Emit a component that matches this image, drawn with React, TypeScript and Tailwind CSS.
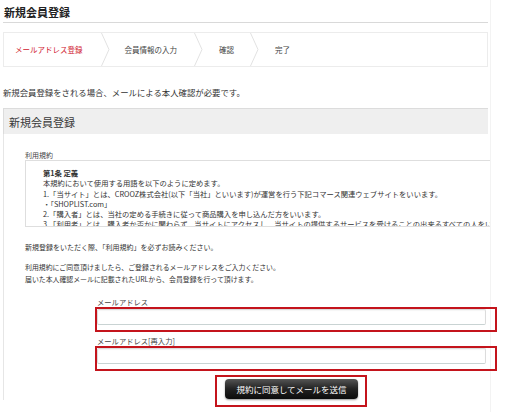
import React from "react";

const Chevron = () => (
  <svg width="9" height="33" viewBox="0 0 9 33" className="shrink-0">
    <polyline points="0.5,0 8,16.5 0.5,33" fill="none" stroke="#e2e2e2" strokeWidth="1" />
  </svg>
);

const termsLines = [
  "本規約において使用する用語を以下のように定めます。",
  "1.「当サイト」とは、CROOZ株式会社(以下「当社」といいます)が運営を行う下記コマース関連ウェブサイトをいいます。",
  "・「SHOPLIST.com」",
  "2.「購入者」とは、当社の定める手続きに従って商品購入を申し込んだ方をいいます。",
  "3.「利用者」とは、購入者か否かに関わらず、当サイトにアクセスし、当サイトの提供するサービスを受けることの出来るすべての人をいいます。",
];

export default function App() {
  return (
    <div className="w-[526px] h-[412px] overflow-hidden bg-white text-[#333] font-['Noto_Sans_CJK_JP','Noto_Sans',sans-serif]">
      <div className="w-[491px] h-[412px] border-r border-[#f3f3f3] pl-[3px] pr-[2px]">
        {/* Title */}
        <div className="h-[22px] pl-[1px] pt-[1px] text-[11px] font-bold leading-[22px] text-[#222]">
          新規会員登録
        </div>
        <div className="h-px bg-[#d9d9d9]" />

        {/* Steps */}
        <div className="mt-[9px] flex h-[35px] items-center border border-[#ececec] text-[7.5px] leading-[10px] text-[#444]">
          <div className="pl-[11px] pr-[18px] text-[#d0202e]">メールアドレス登録</div>
          <Chevron />
          <div className="pl-[15px] pr-[17px]">会員情報の入力</div>
          <Chevron />
          <div className="pl-[16px] pr-[16px]">確認</div>
          <Chevron />
          <div className="pl-[16px]">完了</div>
        </div>

        {/* Intro */}
        <p className="mt-[19px] text-[8.4px] leading-[12px] text-[#333]">
          新規会員登録をされる場合、メールによる本人確認が必要です。
        </p>

        {/* Panel header */}
        <div className="mt-[10px] flex h-[26px] items-center border-t border-l border-[#dcdcdc] bg-[#efefef] pl-[5px] text-[11px] leading-[14px] text-[#3a3a3a]">
          新規会員登録
        </div>

        {/* Panel body */}
        <div className="h-[266px] border-l border-[#e6e6e6] pl-[21px]">
          <div className="pt-[16px] text-[7px] leading-[10px] text-[#444]">利用規約</div>
          <div className="h-[67px] w-[465px] overflow-hidden border border-r-0 border-[#dedede] pl-[17px] pt-[7px] text-[7.3px] leading-[10.3px] text-[#333]">
            <div className="font-bold">第1条 定義</div>
            {termsLines.map((l) => (
              <div key={l} className="whitespace-nowrap">{l}</div>
            ))}
          </div>

          <p className="mt-[15px] text-[7px] leading-[10px] text-[#333]">
            新規登録をいただく際、「利用規約」を必ずお読みください。
          </p>
          <p className="mt-[9px] text-[6.9px] leading-[12px] text-[#333]">
            利用規約にご同意頂けましたら、ご登録されるメールアドレスをご入力ください。
            <br />
            届いた本人確認メールに記載されたURLから、会員登録を行って頂けます。
          </p>

          <div className="ml-[72px] mt-[13px] text-[7.3px] leading-[9px] text-[#444]">メールアドレス</div>
          <div className="ml-[70px] h-[25px] w-[402px] border-2 border-[#c4141c]">
            <div className="h-[16px] w-[389px] rounded-[2px] border border-[#dcdcdc] border-b-[#c9d3d3] bg-white shadow-[inset_0_1px_1px_rgba(0,0,0,0.04)]" />
          </div>

          <div className="ml-[72px] mt-[5px] text-[7.3px] leading-[9px] text-[#444]">メールアドレス[再入力]</div>
          <div className="ml-[70px] h-[25px] w-[402px] border-2 border-[#c4141c]">
            <div className="h-[16px] w-[389px] rounded-[2px] border border-[#dcdcdc] border-b-[#c9d3d3] bg-white shadow-[inset_0_1px_1px_rgba(0,0,0,0.04)]" />
          </div>

          <div className="ml-[190px] mt-[4px] h-[32px] w-[152px] border-2 border-[#c4141c] pl-[8px] pt-[2px]">
            <div className="flex h-[20px] w-[133px] items-center justify-center rounded-[4px] bg-gradient-to-b from-[#555] via-[#222] to-[#0c0c0c] text-[8.5px] leading-[10px] text-white shadow-[0_1px_2px_rgba(0,0,0,0.4)]">
              規約に同意してメールを送信
            </div>
          </div>
        </div>
      </div>
    </div>
  );
}
